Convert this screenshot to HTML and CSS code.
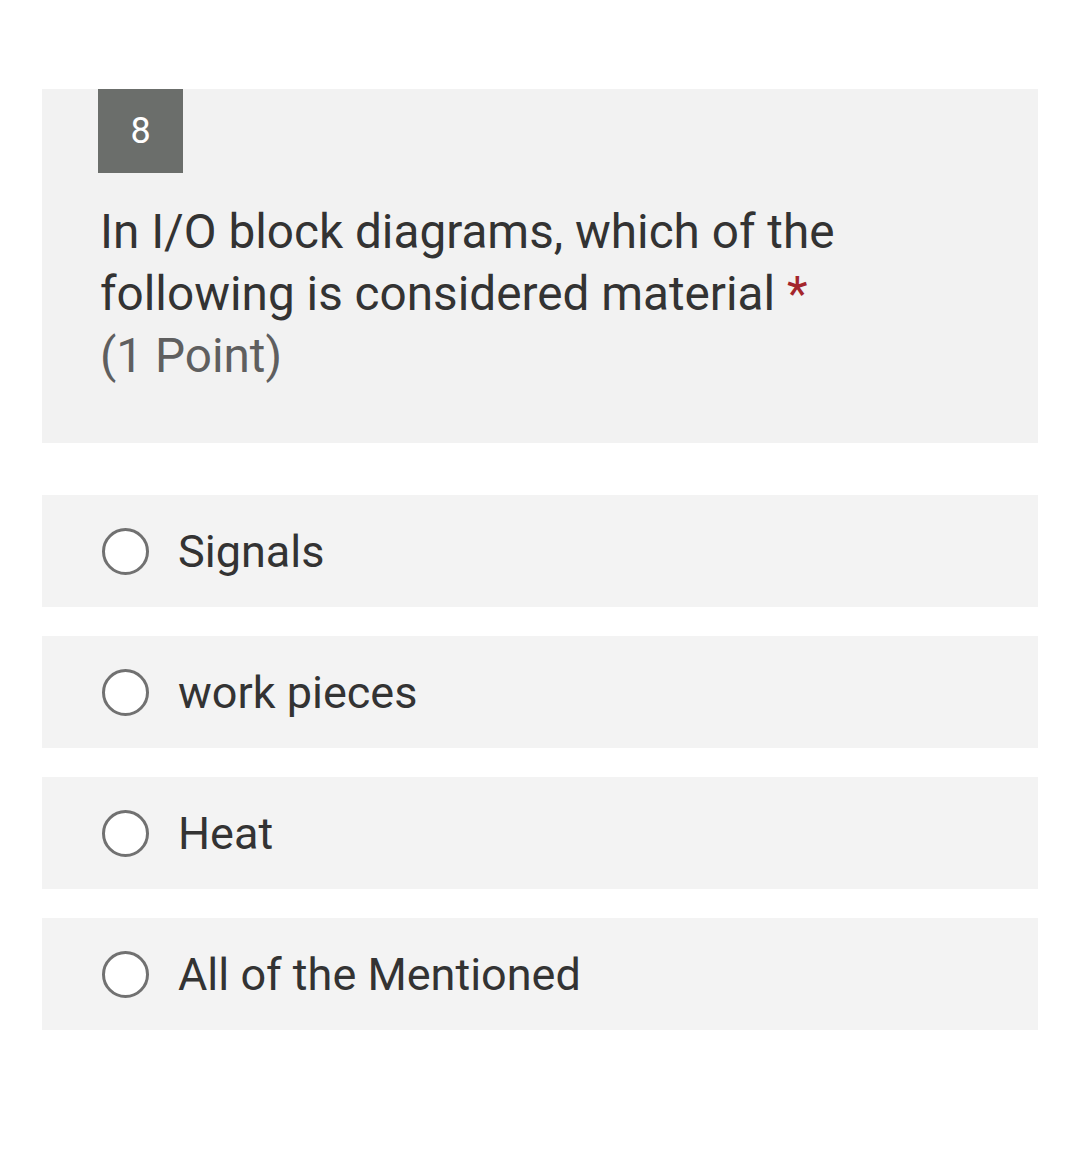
FILE: index.html
```html
<!DOCTYPE html>
<html lang="en">
<head>
<meta charset="utf-8">
<title>Question 8</title>
<link rel="stylesheet" href="styles.css">
</head>
<body>
<main class="form">
  <section class="question">
    <div class="badge">8</div>
    <div class="title">
      <span class="text">In I/O block diagrams, which of the following is considered material</span> <span class="req">*</span>
      <div class="points">(1 Point)</div>
    </div>
  </section>
  <div class="options">
    <label class="option"><span class="radio"></span><span class="label">Signals</span></label>
    <label class="option"><span class="radio"></span><span class="label">work pieces</span></label>
    <label class="option"><span class="radio"></span><span class="label">Heat</span></label>
    <label class="option"><span class="radio"></span><span class="label">All of the Mentioned</span></label>
  </div>
</main>
</body>
</html>
```
FILE: styles.css
```css
html, body {
  margin: 0;
  padding: 0;
  background: #ffffff;
}

body {
  font-family: Roboto, "Noto Sans", "Liberation Sans", sans-serif;
  color: #333333;
}

.form {
  width: 996px;
  margin-left: 42px;
  padding-top: 89px;
}

.question {
  background: #f2f2f2;
  padding: 0 56px 56px 56px;
}

.badge {
  width: 85px;
  height: 84px;
  background: #6b6e6b;
  color: #ffffff;
  font-size: 36px;
  display: flex;
  align-items: center;
  justify-content: center;
}

.title {
  margin: 28px 0 0 2px;
  max-width: 780px;
  font-size: 47.7px;
  line-height: 62px;
  color: #333333;
}

.req {
  color: #a4262c;
}

.points {
  color: #5f5f5f;
}

.options {
  margin-top: 52px;
  display: flex;
  flex-direction: column;
  gap: 29px;
}

.option {
  height: 112px;
  background: #f3f3f3;
  display: flex;
  align-items: center;
  padding-left: 60px;
}

.radio {
  width: 47px;
  height: 47px;
  box-sizing: border-box;
  border: 3px solid #717171;
  border-radius: 50%;
  background: #ffffff;
  flex: none;
}

.label {
  margin-left: 29px;
  font-size: 45px;
  color: #333333;
}
```
